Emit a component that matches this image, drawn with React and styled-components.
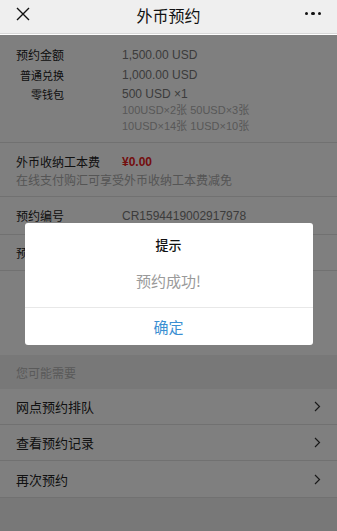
import styled, { createGlobalStyle } from 'styled-components';

const GlobalStyle = createGlobalStyle`
  html, body {
    margin: 0;
    padding: 0;
    background: #f0f0f0;
    font-family: "Liberation Sans", "Noto Sans CJK SC", sans-serif;
  }
  * { box-sizing: border-box; }
`;

const Page = styled.div`
  width: 337px;
  height: 531px;
  overflow: hidden;
  position: relative;
  background: #f0f0f0;
`;

const NavBar = styled.div`
  height: 34px;
  background: #efefef;
  border-bottom: 1px solid #d8d8d8;
  display: grid;
  grid-template-columns: 60px 1fr 60px;
  align-items: center;
`;

const NavTitle = styled.div`
  text-align: center;
  font-size: 16px;
  color: #111;
  font-family: "Noto Sans CJK SC", sans-serif;
  margin-top: -4px;
`;

const NavLeft = styled.div`
  padding-left: 16px;
  display: flex;
  margin-top: -6px;
`;

const NavRight = styled.div`
  display: flex;
  justify-content: flex-end;
  padding-right: 16px;
  gap: 3px;
  margin-top: -6px;
`;

const Dot = styled.span`
  width: 3.5px;
  height: 3.5px;
  border-radius: 50%;
  background: #111;
`;

const Card = styled.div`
  background: #fff;
  font-family: "Liberation Sans", "Noto Sans CJK SC", sans-serif;
`;

const Section = styled.div`
  padding: ${p => p.$pad || '0'};
  border-bottom: 1px solid #e2e2e2;
  padding-left: 16px;
`;

const Line = styled.div`
  display: flex;
  align-items: flex-start;
  line-height: ${p => p.$lh || 20}px;
`;

const Label = styled.div`
  width: 106px;
  flex-shrink: 0;
  font-size: ${p => (p.$sub ? 11 : 12)}px;
  color: #222;
  font-family: "Noto Sans CJK SC", sans-serif;
  ${p => p.$sub && 'text-align: right; width: 48px; margin-right: 58px;'}
`;

const Value = styled.div`
  font-size: 12px;
  color: #787878;
`;

const Small = styled.div`
  font-size: 11px;
  color: #b0b0b0;
  font-family: "Liberation Sans", "Noto Sans CJK SC", sans-serif;
`;

const Fee = styled.div`
  font-size: 12px;
  font-weight: bold;
  color: #e82020;
`;

const Hint = styled.div`
  font-size: 12px;
  color: #aaa;
  line-height: 18px;
  font-family: "Noto Sans CJK SC", sans-serif;
`;

const InfoRow = styled.div`
  height: ${p => p.$h || 37}px;
  display: flex;
  align-items: center;
  border-bottom: 1px solid #e2e2e2;
  padding-left: 16px;
`;

const Spacer = styled.div`
  height: 84px;
`;

const GroupTitle = styled.div`
  height: 34px;
  display: flex;
  align-items: center;
  padding-left: 16px;
  font-size: 12px;
  color: #b4b4b4;
  font-family: "Noto Sans CJK SC", sans-serif;
`;

const LinkRow = styled.div`
  height: ${p => p.$h}px;
  background: #fff;
  border-bottom: 1px solid #e2e2e2;
  display: flex;
  align-items: center;
  justify-content: space-between;
  padding: 0 16px;
  font-size: 13px;
  color: #222;
  font-family: "Noto Sans CJK SC", sans-serif;
`;

const Overlay = styled.div`
  position: absolute;
  top: 35px;
  left: 0;
  right: 0;
  bottom: 0;
  background: rgba(0, 0, 0, 0.5);
  display: flex;
  flex-direction: column;
  align-items: center;
  padding-top: 188px;
`;

const Dialog = styled.div`
  width: 288px;
  background: #fff;
  border-radius: 3px;
  font-family: "Noto Sans CJK SC", sans-serif;
  text-align: center;
`;

const DialogTitle = styled.div`
  padding-top: 13px;
  font-size: 13px;
  line-height: 18px;
  color: #111;
  font-weight: 500;
`;

const DialogMsg = styled.div`
  padding: 17px 0 16px;
  font-size: 15px;
  line-height: 20px;
  color: #9a9a9a;
`;

const DialogBtn = styled.div`
  border-top: 1px solid #e8e8e8;
  height: 38px;
  display: flex;
  align-items: center;
  justify-content: center;
  font-size: 15px;
  color: #3b8fd2;
`;

const Close = () => (
  <svg width="14" height="14" viewBox="0 0 14 14">
    <path d="M1 1L13 13M13 1L1 13" stroke="#111" strokeWidth="1.4" fill="none" />
  </svg>
);

const Chevron = () => (
  <svg width="7" height="11" viewBox="0 0 7 11">
    <path d="M1 1L5.5 5.5L1 10" stroke="#333" strokeWidth="1.2" fill="none" />
  </svg>
);

const links = [
  { t: '网点预约排队', h: 36 },
  { t: '查看预约记录', h: 36 },
  { t: '再次预约', h: 37 },
];

export default function App() {
  return (
    <Page>
      <GlobalStyle />
      <NavBar>
        <NavLeft><Close /></NavLeft>
        <NavTitle>外币预约</NavTitle>
        <NavRight><Dot /><Dot /><Dot /></NavRight>
      </NavBar>
      <Card>
        <Section $pad="11px 0 8px">
          <Line><Label>预约金额</Label><Value>1,500.00 USD</Value></Line>
          <Line $lh={21}><Label $sub>普通兑换</Label><Value>1,000.00 USD</Value></Line>
          <Line $lh={16}>
            <Label $sub>零钱包</Label>
            <div>
              <Value>500 USD ×1</Value>
              <Small>100USD×2张 50USD×3张</Small>
              <Small>10USD×14张 1USD×10张</Small>
            </div>
          </Line>
        </Section>
        <Section $pad="10px 0 7px">
          <Line $lh={18}><Label>外币收纳工本费</Label><Fee>¥0.00</Fee></Line>
          <Hint>在线支付购汇可享受外币收纳工本费减免</Hint>
        </Section>
        <InfoRow $h={38}><Label>预约编号</Label><Value>CR1594419002917978</Value></InfoRow>
        <InfoRow $h={36}><Label>预约网点</Label><Value>中国银行上海分行营业部</Value></InfoRow>
        <Spacer />
      </Card>
      <GroupTitle>您可能需要</GroupTitle>
      {links.map(l => (
        <LinkRow key={l.t} $h={l.h}>{l.t}<Chevron /></LinkRow>
      ))}
      <Overlay>
        <Dialog>
          <DialogTitle>提示</DialogTitle>
          <DialogMsg>预约成功!</DialogMsg>
          <DialogBtn>确定</DialogBtn>
        </Dialog>
      </Overlay>
    </Page>
  );
}
